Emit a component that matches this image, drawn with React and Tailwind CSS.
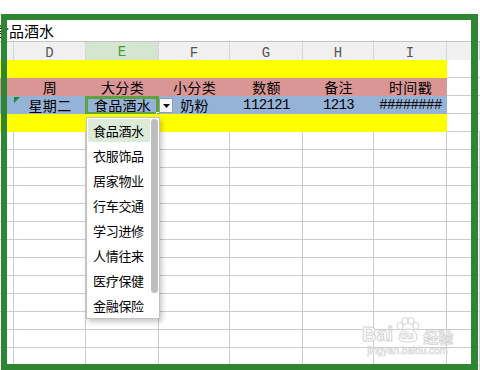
const grid = "grid grid-cols-[14px_72px_73px_71px_73px_71px_73px_1fr]";
const letters = ["", "D", "E", "F", "G", "H", "I", ""];
const menu = ["食品酒水", "衣服饰品", "居家物业", "行车交通", "学习进修", "人情往来", "医疗保健", "金融保险"];

const ColorRow = ({ bg, cells = [], children }) => (
  <div className={`${grid} h-[18px]`}>
    {[0, 1, 2, 3, 4, 5, 6].map((i) => (
      <div key={i} className={`${bg} relative h-[18px] flex items-center justify-center text-[14px] leading-[16px] tracking-[0.3px] text-black`}>
        {children && children[i] ? children[i] : cells[i]}
      </div>
    ))}
    <div className="border-b border-[#cccccc] bg-white" />
  </div>
);

const App = () => {
  const num = "font-['Liberation_Mono',monospace] text-[14px] leading-[16px] tracking-[-0.6px]";

  return (
    <div className="relative w-[480px] h-[370px] overflow-hidden bg-white font-['Noto_Sans_CJK_SC',sans-serif]">
      <div className="h-[20px]" />
      <div className="h-[22px] border-b border-[#c4c4c4] overflow-hidden">
        <span className="block ml-[-6px] text-[15px] leading-[21px] text-black whitespace-nowrap">食品酒水</span>
      </div>

      {/* column headers */}
      <div className={`${grid} h-[18px]`}>
        {letters.map((l, i) => (
          <div
            key={i}
            className={`flex items-center justify-center pt-[2px] font-['Liberation_Mono',monospace] text-[14px] leading-[16px] border-r border-[#d6d6d6] ${
              l === "E" ? "bg-[#d5e6d0] text-[#4b9a33] border-b-2 border-b-[#5aa33f]" : "bg-[#f0f0f0] text-[#555] border-b border-b-[#c9c9c9]"
            }`}
          >
            {l}
          </div>
        ))}
      </div>

      <ColorRow bg="bg-[#ffff00]" />
      <ColorRow bg="bg-[#da9694]" cells={["", "周", "大分类", "小分类", "数额", "备注", "时间戳"]} />
      <ColorRow
        bg="bg-[#95b3d7]"
        children={[
          "",
          <>
            <svg className="absolute left-0 top-[1px]" width="6" height="6" viewBox="0 0 6 6">
              <polygon points="0,0 6,0 0,6" fill="#1f8a2a" />
            </svg>
            星期二
          </>,
          <>
            食品酒水
            <div className="absolute -left-px top-0 right-0 -bottom-px border-[3px] border-[#5ea33f]" />
            <div className="absolute right-[-3px] bottom-[-4px] w-[6px] h-[6px] bg-[#5ea33f] border border-white" />
          </>,
          <>
            <div className="absolute left-0 top-[2px] w-[14px] h-[15px] bg-[#f6f6f6] border border-[#9c9c9c] flex items-center justify-center">
              <svg width="7" height="4" viewBox="0 0 7 4">
                <polygon points="0,0 7,0 3.5,4" fill="#111" />
              </svg>
            </div>
            奶粉
          </>,
          <span className={num}>112121</span>,
          <span className={num}>1213</span>,
          <span className={num}>########</span>,
        ]}
      />
      <ColorRow bg="bg-[#ffff00]" />

      {Array.from({ length: 14 }).map((_, r) => (
        <div key={r} className={`${grid} h-[18px]`}>
          {letters.map((_, i) => (
            <div key={i} className="border-r border-b border-[#cccccc]" />
          ))}
        </div>
      ))}

      {/* data validation dropdown */}
      <div className="absolute left-[86px] top-[117px] w-[74px] h-[202px] bg-white border border-[#c2c2c2] shadow-[2px_3px_5px_rgba(0,0,0,0.22)] flex">
        <div className="w-[63px] pt-px">
          {menu.map((m, i) => (
            <div
              key={m}
              className={`ml-px mb-[2px] h-[23px] pl-[5px] text-[13px] leading-[23px] tracking-[-0.3px] text-black whitespace-nowrap ${
                i === 0 ? "bg-[#dcebd7]" : ""
              }`}
            >
              {m}
            </div>
          ))}
        </div>
        <div className="pt-px pl-px">
          <div className="w-[7px] h-[174px] rounded-full bg-[#bdbdbd]" />
        </div>
      </div>

      {/* watermark */}
      <div className="absolute left-[362px] top-[316px] flex flex-col items-center pointer-events-none">
        <div className="flex items-end">
          <span className="text-[20px] font-bold leading-none text-white [-webkit-text-stroke:1px_#d4d4d4] font-['Liberation_Sans',sans-serif]">Bai</span>
          <div className="relative w-[28px] h-[28px] mx-[1px]">
            <svg width="28" height="28" viewBox="0 0 28 28" className="absolute inset-0">
              <g fill="white" stroke="#d4d4d4" strokeWidth="1">
                <ellipse cx="6" cy="10" rx="3" ry="3.5" />
                <ellipse cx="11" cy="5" rx="3" ry="3.5" />
                <ellipse cx="17" cy="5" rx="3" ry="3.5" />
                <ellipse cx="22" cy="10" rx="3" ry="3.5" />
                <path d="M5 23 C5 15 10 13 14 13 C18 13 23 15 23 23 C23 27 5 27 5 23 Z" />
              </g>
            </svg>
            <span className="absolute left-[6px] top-[14px] text-[11px] font-bold leading-none text-white [-webkit-text-stroke:0.6px_#cfcfcf] font-['Liberation_Sans',sans-serif]">du</span>
          </div>
          <span className="text-[15px] font-bold leading-none text-white [-webkit-text-stroke:0.8px_#d4d4d4]">经验</span>
        </div>
        <span className="mt-[2px] text-[10px] leading-none text-white [-webkit-text-stroke:0.6px_#d6d6d6] font-['Liberation_Sans',sans-serif]">jingyan.baidu.com</span>
      </div>

      {/* green annotation frame */}
      <div className="absolute left-[1px] top-[14px] w-[477px] h-[356px] border-[6px] border-r-[7px] border-[#2e8633] pointer-events-none" />
    </div>
  );
};

export default App;
